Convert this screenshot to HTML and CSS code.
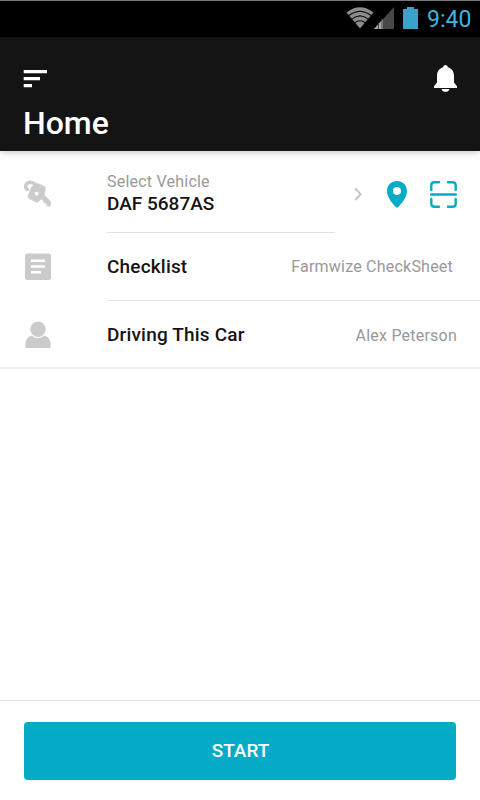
FILE: index.html
```html
<!DOCTYPE html>
<html lang="en">
<head>
    <meta charset="UTF-8">
    <meta name="viewport" content="width=device-width, initial-scale=1.0">
    <title>Home</title>
    <link rel="stylesheet" href="styles.css">
</head>
<body>
    <div class="status-bar">
        <svg class="wifi" width="28" height="22" viewBox="0 0 28 22">
            <path d="M0.500 5.500Q14-5 27.500 5.500L14 21.500Z" fill="#8c8c8c"/>
            <path d="M2.500 8.800Q14 0 25.500 8.800M5.500 12.400Q14 5.500 22.500 12.400M8.500 16Q14 11.500 19.500 16" fill="none" stroke="#111" stroke-width="1.200"/>
        </svg>
        <svg class="signal" width="20" height="22" viewBox="0 0 20 22">
            <path d="M20 0V22H0Z" fill="#484848"/>
            <path d="M9 12V22H0Z" fill="#aaa"/>
            <path d="M4.500 16V22M8 12V22" stroke="#444" stroke-width="1"/>
        </svg>
        <svg class="battery" width="15" height="22" viewBox="0 0 15 22">
            <path d="M4 0H11V2H15V22H0V2H4Z" fill="#3ba3c9"/>
        </svg>
        <span class="time">9:40</span>
    </div>
    <header class="header">
        <div class="header-icons">
            <svg class="menu-icon" width="24" height="18" viewBox="0 0 24 18">
                <path d="M0.700 0H24V3.200H0.700ZM0.700 7H17V10.200H0.700ZM0.700 14H9V17.300H0.700Z" fill="#fff"/>
            </svg>
            <svg class="bell-icon" width="23" height="27" viewBox="0 0 23 27">
                <path d="M11.500 0C12.900 0 13.700 1 13.800 2.200C17.700 3.300 20 6.500 20 10.500V17.500L23 21.300V23H0V21.300L3 17.500V10.500C3 6.500 5.300 3.300 9.200 2.200C9.300 1 10.100 0 11.500 0ZM7.500 24H15.500C15 26 13.500 26.800 11.500 26.800S8 26 7.500 24Z" fill="#fff"/>
            </svg>
        </div>
        <h1 class="title">Home</h1>
    </header>
    <main class="list">
        <div class="row row-vehicle">
            <div class="row-icon">
                <svg width="28" height="28" viewBox="0 0 28 28">
                    <path d="M3.300 9.500C0.500 7.500 1.500 3.500 5 2.500C8 1.700 10 3 12 5.500" fill="none" stroke="#cbcbcb" stroke-width="3.400" stroke-linecap="round"/>
                    <path fill-rule="evenodd" d="M12.500 3.300L20 6.300Q21.500 7 21.300 8.500L20.300 15.300L26.500 21.500Q27.500 24.500 25.500 26.500L22.700 25.500V23.300L20.200 22.800L19.500 20.300L17.200 19L14 21.700Q13 22.500 11.700 21.800L5.200 18.500Q3.700 17.500 4.300 15.800L7.500 7ZM12.700 11.500A2.300 2.300 0 1 0 12.700 16.100A2.300 2.300 0 1 0 12.700 11.500Z" fill="#cbcbcb" stroke="#cbcbcb" stroke-width="0.800" stroke-linejoin="round"/>
                </svg>
            </div>
            <div class="row-text">
                <span class="label">Select Vehicle</span>
                <span class="name">DAF 5687AS</span>
            </div>
            <div class="row-actions">
                <svg class="chevron" width="9" height="14" viewBox="0 0 9 14">
                    <path d="M1.200 1.500L6.700 7.200L1.200 13" fill="none" stroke="#c4c4c4" stroke-width="1.900"/>
                </svg>
                <svg class="pin" width="20" height="27" viewBox="0 0 20 27">
                    <path fill-rule="evenodd" d="M10 0C15.600 0 20 4.300 20 10C20 16.500 14.500 22.500 11 26.200Q10 27 9 26.200C5.500 22.500 0 16.500 0 10C0 4.300 4.400 0 10 0ZM10 6A4 4 0 1 0 10 14A4 4 0 1 0 10 6Z" fill="#04abc5"/>
                </svg>
                <svg class="scan" width="27" height="27" viewBox="0 0 27 27">
                    <path d="M1.300 9V4.300Q1.300 1.300 4.300 1.300H9M18 1.300H22.700Q25.700 1.300 25.700 4.300V9M25.700 18V22.700Q25.700 25.700 22.700 25.700H18M9 25.700H4.300Q1.300 25.700 1.300 22.700V18M1.200 13.500H25.800" fill="none" stroke="#04abc5" stroke-width="2.400" stroke-linecap="round"/>
                </svg>
            </div>
        </div>
        <div class="row row-checklist">
            <div class="row-icon">
                <svg width="28" height="28" viewBox="0 0 28 28">
                    <rect x="1" y="0.500" width="26" height="26.500" rx="2.500" fill="#cbcbcb"/>
                    <path d="M7 7.800H21M7 13.500H21M7 19.300H17" stroke="#fff" stroke-width="2.600"/>
                </svg>
            </div>
            <span class="name">Checklist</span>
            <span class="value">Farmwize CheckSheet</span>
        </div>
        <div class="row row-driver">
            <div class="row-icon">
                <svg width="28" height="28" viewBox="0 0 28 28">
                    <path d="M1.300 25.500Q0.800 16.500 7.500 14.500H20.500Q27.200 16.500 26.700 25.500Q26.500 27 25 27H3Q1.500 27 1.300 25.500Z" fill="#cbcbcb"/>
                    <circle cx="14" cy="8.300" r="8.300" fill="#cbcbcb" stroke="#fff" stroke-width="1.200"/>
                </svg>
            </div>
            <span class="name">Driving This Car</span>
            <span class="value">Alex Peterson</span>
        </div>
    </main>
    <footer class="footer">
        <button class="start-btn">START</button>
    </footer>
</body>
</html>
```
FILE: styles.css
```css
* {
    box-sizing: border-box;
}
body {
    margin: 0;
    height: 100vh;
    display: flex;
    flex-direction: column;
    font-family: Roboto, sans-serif;
    color: #141414;
    background: #fff;
}
svg {
    display: block;
    flex-shrink: 0;
}
.status-bar {
    height: 37px;
    display: flex;
    justify-content: flex-end;
    align-items: center;
    padding: 0 8px 2px 0;
    background: #000;
    border-top: 1px solid #777;
}
.battery {
    margin: 0 9px;
}
.time {
    width: 45px;
    font-size: 23px;
    line-height: 28px;
    color: #3fb4dd;
    padding-top: 3px;
}
.header {
    height: 114px;
    padding: 28px 23px 0;
    background: #141414;
    box-shadow: 0 1px 8px rgba(0, 0, 0, 0.25);
}
.header-icons {
    display: flex;
    justify-content: space-between;
    align-items: center;
    height: 27px;
}
.title {
    margin: 12px 0 0;
    font-size: 32px;
    line-height: 38px;
    font-weight: 500;
    color: #fff;
}
.list {
    border-bottom: 2px solid #ededed;
}
.row {
    display: flex;
    align-items: center;
    padding-right: 23px;
}
.row-icon {
    width: 107px;
    padding-left: 24px;
    flex-shrink: 0;
}
.row-vehicle {
    height: 82px;
    padding-top: 4px;
    /* divider stops before the action icons */
    background: linear-gradient(#e2e2e2, #e2e2e2) 107px 100% / 228px 1px no-repeat;
}
.row-text {
    flex: 1;
    display: flex;
    flex-direction: column;
}
.label {
    font-size: 16px;
    line-height: 20px;
    letter-spacing: 0.22px;
    color: #999;
}
.name {
    font-size: 19px;
    line-height: 24px;
    font-weight: 500;
}
.row-actions {
    display: flex;
    align-items: center;
}
.pin {
    margin: 0 23px 0 24px;
}
.row-checklist {
    height: 68px;
    padding: 0 27px 1px 0;
    background: linear-gradient(#e6e6e6, #e6e6e6) 107px 100% / 373px 1px no-repeat;
}
.row-checklist .name,
.row-driver .name {
    letter-spacing: 0.18px;
}
.row-driver {
    height: 66px;
    padding-top: 2px;
}
.value {
    margin-left: auto;
    font-size: 16px;
    letter-spacing: 0.22px;
    color: #999;
}
.footer {
    margin-top: auto;
    height: 100px;
    padding: 21px 24px 0;
    border-top: 1px solid #e0e0e0;
}
.start-btn {
    display: block;
    width: 432px;
    height: 58px;
    padding: 0 0 2px 1px;
    border: none;
    border-radius: 4px;
    background: #03abc6;
    color: #fff;
    font-family: inherit;
    font-size: 19px;
    font-weight: 500;
}
```
